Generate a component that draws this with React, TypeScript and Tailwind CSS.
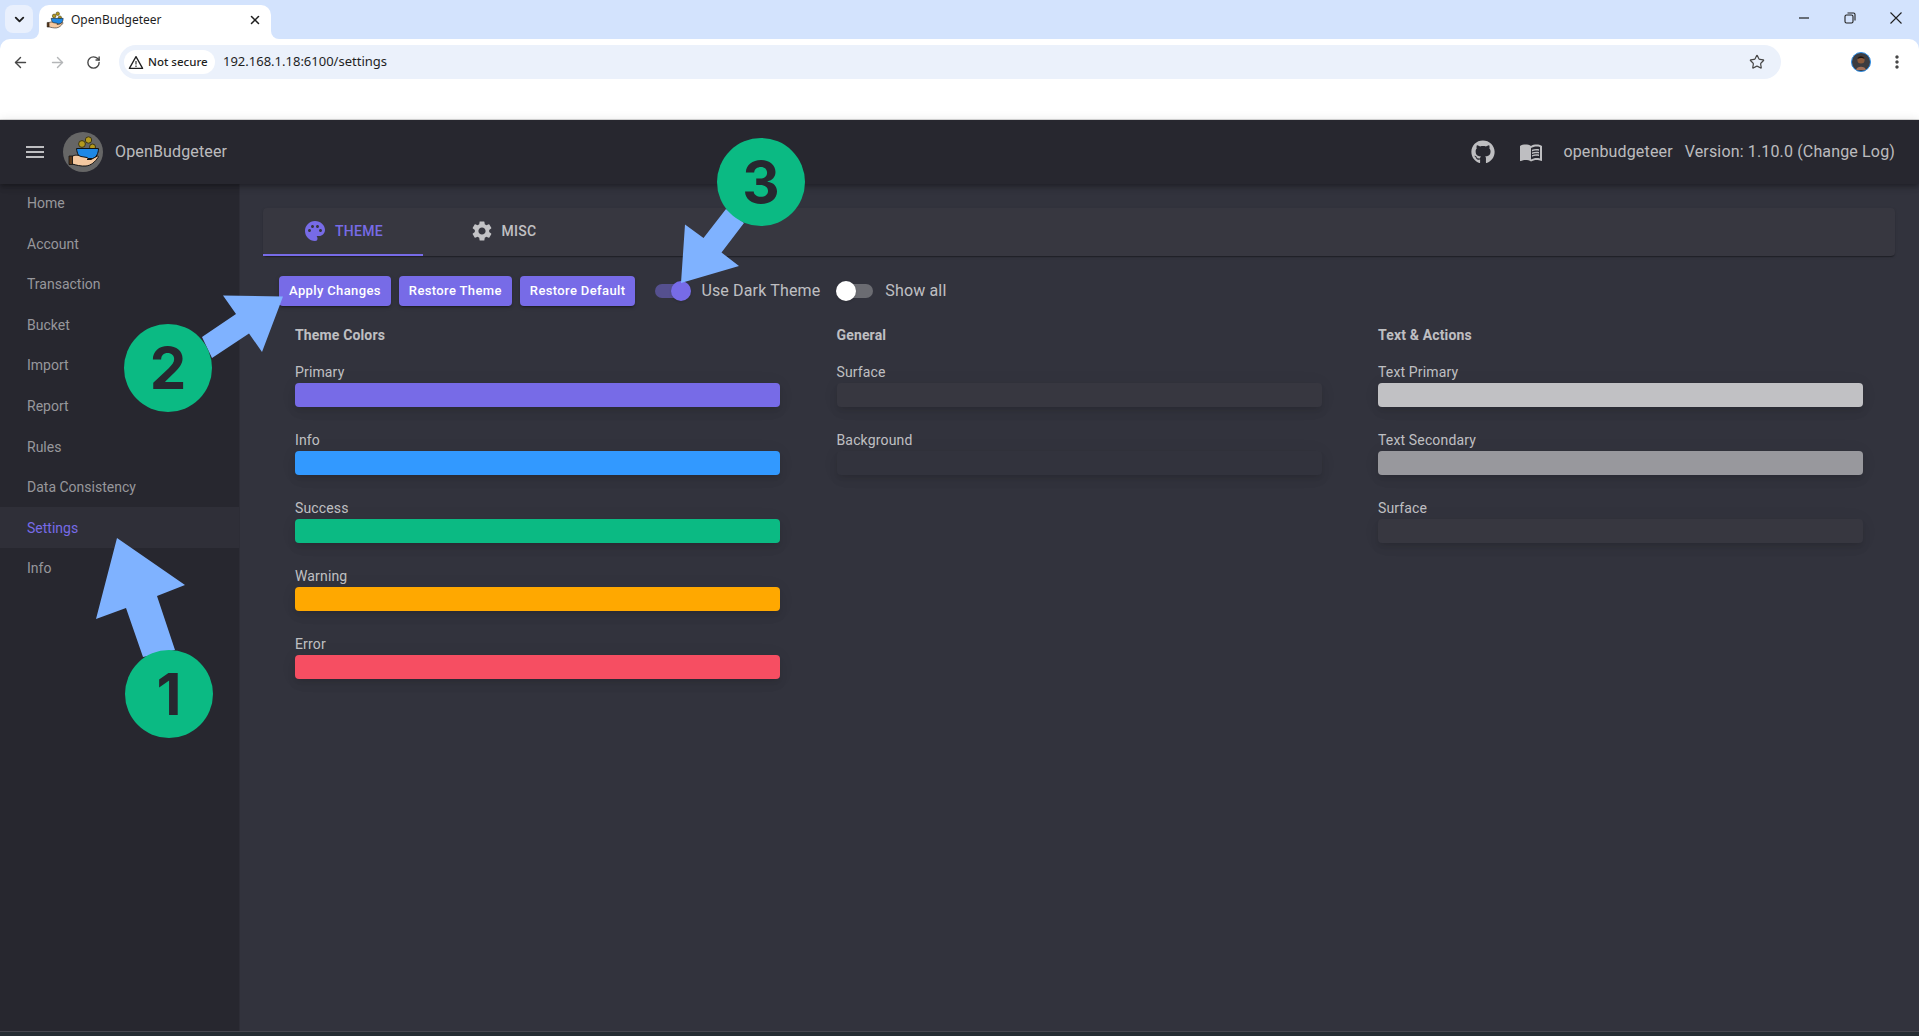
import { ReactNode } from "react";
import { ArrowLeft, ArrowRight, ChevronDown, RotateCw, Star, X } from "lucide-react";
import { FaGithub } from "react-icons/fa";
import { MdMenu, MdMenuBook, MdMoreVert, MdPalette, MdSettings } from "react-icons/md";

const navItems = ["Home", "Account", "Transaction", "Bucket", "Import", "Report", "Rules", "Data Consistency", "Settings", "Info"];

const swatchShadow = "shadow-[0_3px_5px_-1px_rgba(0,0,0,0.08),0_6px_10px_0_rgba(0,0,0,0.06),0_1px_18px_0_rgba(0,0,0,0.05)]";

const columns = [
  {
    title: "Theme Colors",
    rows: [
      { label: "Primary", color: "bg-[#776be7]" },
      { label: "Info", color: "bg-[#3299ff]" },
      { label: "Success", color: "bg-[#0bba83]" },
      { label: "Warning", color: "bg-[#ffa800]" },
      { label: "Error", color: "bg-[#f64e62]" },
    ],
  },
  {
    title: "General",
    rows: [
      { label: "Surface", color: "bg-[#373740]" },
      { label: "Background", color: "bg-[#32333d]" },
    ],
  },
  {
    title: "Text & Actions",
    rows: [
      { label: "Text Primary", color: "bg-[#c1c1c4]" },
      { label: "Text Secondary", color: "bg-[#98989d]" },
      { label: "Surface", color: "bg-[#373740]" },
    ],
  },
];

const Logo = ({ size, disc }: { size: number; disc?: boolean }) => (
  <svg width={size} height={size} viewBox={disc ? "0 0 40 40" : "4 3 33 33"} className="shrink-0">
    {disc && <circle cx="20" cy="20" r="20" fill="#666666" />}
    <circle cx="19" cy="12" r="3.4" fill="#b59a1c" stroke="#3a3416" strokeWidth="1" />
    <circle cx="25.5" cy="8" r="3.2" fill="#b59a1c" stroke="#3a3416" strokeWidth="1" />
    <circle cx="29.5" cy="15" r="3" fill="#b59a1c" stroke="#3a3416" strokeWidth="1" />
    <path d="M13.5 16.5H35.5C35.5 21.5 33 25.5 30 26.5H19C16 25.5 14 21.5 13.5 16.5Z" fill="#1e88e5" stroke="#111" strokeWidth="1" />
    <path d="M9 24.5C12 22.5 15 23 18 24.5L24 25.5C25.5 26 25.5 27.5 24 27.5L28 27.5L34.5 24C35.5 24 35.5 25 35 25.5C32 30 28 33.5 23 34C18 34.5 13 33 9 32Z" fill="#f5c9a0" stroke="#111" strokeWidth="1" />
    <path d="M6 24H9.5V32.5H6Z" fill="#5d3a1a" stroke="#111" strokeWidth="0.8" />
  </svg>
);

const Switch = ({ on }: { on?: boolean }) => (
  <span className={`relative block w-[34px] h-[14px] rounded-full ${on ? "bg-[#55508f]" : "bg-[#6b6c72]"}`}>
    <span className={`absolute top-[-3px] w-5 h-5 rounded-full shadow ${on ? "right-[-2px] bg-[#776be7]" : "left-[-3px] bg-white"}`} />
  </span>
);

const Tab = ({ icon, label, active }: { icon: ReactNode; label: string; active?: boolean }) => (
  <div className={`w-40 h-12 flex items-center justify-center gap-2 border-b-2 text-sm font-medium uppercase tracking-[0.02em] ${active ? "border-[#776be7] text-[#776be7]" : "border-transparent text-white/70"}`}>
    {icon}
    <span>{label}</span>
  </div>
);

const ActionButton = ({ children }: { children: ReactNode }) => (
  <button className="h-[30px] px-[10px] rounded bg-[#776be7] text-white text-[13px] font-medium tracking-[0.02857em] shadow-[0_3px_1px_-2px_rgba(0,0,0,0.2),0_2px_2px_0_rgba(0,0,0,0.14),0_1px_5px_0_rgba(0,0,0,0.12)]">
    {children}
  </button>
);

const BrowserChrome = () => (
  <div className="h-[120px] bg-[#d3e3fd] shrink-0 flex flex-col font-['Noto_Sans',sans-serif]">
    <div className="h-[39px] flex items-end">
      <div className="ml-[5px] mb-[6px] w-7 h-7 rounded-lg bg-[#e9f0fd] flex items-center justify-center text-[#1f1f1f]">
        <ChevronDown size={15} strokeWidth={3} />
      </div>
      <div className="relative ml-[6px] w-[232px] h-[34px] bg-white rounded-t-[10px] flex items-center pl-[7px] pr-2 pb-1">
        <span className="absolute bottom-0 left-[-8px] w-2 h-2 bg-white">
          <span className="block w-2 h-2 bg-[#d3e3fd] rounded-br-lg" />
        </span>
        <span className="absolute bottom-0 right-[-8px] w-2 h-2 bg-white">
          <span className="block w-2 h-2 bg-[#d3e3fd] rounded-bl-lg" />
        </span>
        <Logo size={18} />
        <span className="ml-[7px] text-xs text-[#1f1f1f]">OpenBudgeteer</span>
        <X size={14} strokeWidth={2.6} className="ml-auto mr-[1px] text-[#1f1f1f]" />
      </div>
      <div className="ml-auto h-full flex items-center pr-4 pb-1 gap-[32px] text-[#1f1f1f]">
        <svg width="14" height="14" viewBox="0 0 14 14"><path d="M2 7H12" stroke="currentColor" strokeWidth="1.2" /></svg>
        <svg width="14" height="14" viewBox="0 0 14 14" fill="none" stroke="currentColor" strokeWidth="1.1"><rect x="2" y="4" width="8" height="8" rx="1.5" /><path d="M4.5 2H10.5C11.5 2 12 2.5 12 3.5V9.5" /></svg>
        <svg width="14" height="14" viewBox="0 0 14 14" fill="none" stroke="currentColor" strokeWidth="1.1"><path d="M1.5 1.5L12.5 12.5M12.5 1.5L1.5 12.5" /></svg>
      </div>
    </div>
    <div className="flex-1 bg-white rounded-t-[10px] border-b border-[#dcdcdc]">
      <div className="h-[46px] flex items-center">
        <div className="w-[119px] flex items-center pl-[12px] gap-[20px]">
          <ArrowLeft size={17} strokeWidth={2} className="text-[#474747]" />
          <ArrowRight size={17} strokeWidth={2} className="text-[#b4b6b8]" />
          <RotateCw size={15} strokeWidth={2.2} className="text-[#474747]" />
        </div>
        <div className="w-[1662px] h-[34px] rounded-full bg-[#ebf1fb] flex items-center pl-[5px] pr-[16px]">
          <div className="h-6 w-[91px] rounded-full bg-white flex items-center pl-[4px]">
            <svg width="16" height="15" viewBox="0 0 16 15" fill="none" stroke="#1f1f1f" strokeWidth="1.3">
              <path d="M8 1.6L14.6 13.4H1.4Z" strokeLinejoin="round" />
              <path d="M8 6V9.6M8 10.6V12" strokeWidth="1.1" />
            </svg>
            <span className="ml-[4px] text-[11.5px] font-medium text-[#1f1f1f]">Not secure</span>
          </div>
          <span className="ml-[8px] text-[13px] text-[#1f1f1f]">192.168.1.18:6100/settings</span>
          <Star size={16} strokeWidth={1.8} className="ml-auto text-[#474747]" />
        </div>
        <div className="flex-1 flex items-center pl-[70px] gap-4">
          <svg width="20" height="20" viewBox="0 0 20 20" className="shrink-0">
            <circle cx="10" cy="10" r="9.5" fill="#3c3c40" stroke="#2f8fe8" strokeWidth="1" />
            <circle cx="10" cy="8" r="3.6" fill="#8a5a3c" />
            <path d="M6.5 7C6.8 3.5 13 3.4 13.5 7C11.5 5.8 9 5.8 6.5 7Z" fill="#1c1410" />
            <path d="M5 18C5.5 13.5 14.5 13.5 15 18Z" fill="#a0705a" />
          </svg>
          <MdMoreVert size={20} className="text-[#474747] shrink-0" />
        </div>
      </div>
    </div>
  </div>
);

const TopBar = () => (
  <header className="relative z-10 h-16 shrink-0 bg-[#27272f] text-white/70 text-base tracking-[0.00938em] flex items-center shadow-[0_2px_4px_-1px_rgba(0,0,0,0.2),0_4px_5px_0_rgba(0,0,0,0.14),0_1px_10px_0_rgba(0,0,0,0.12)]">
    <MdMenu size={24} className="ml-[23px]" />
    <div className="ml-[16px]"><Logo size={40} disc /></div>
    <span className="ml-3">OpenBudgeteer</span>
    <div className="ml-auto flex items-center pr-6">
      <FaGithub size={24} />
      <MdMenuBook size={24} className="ml-6" />
      <span className="ml-5">openbudgeteer</span>
      <span className="ml-3">Version: 1.10.0 (Change Log)</span>
    </div>
  </header>
);

const Sidebar = () => (
  <nav className="w-[240px] shrink-0 bg-[#27272f] border-r border-[#2d2d36] text-sm text-[#97979c]">
    <div className="-mt-[1.3px]">
      {navItems.map((item) => (
        <div key={item} className={`h-[40.6px] pl-[27px] flex items-center ${item === "Settings" ? "bg-[#2f2f38] text-[#776be7]" : ""}`}>
          {item}
        </div>
      ))}
    </div>
  </nav>
);

const SettingsPanel = () => (
  <main className="flex-1 bg-[#32333d] pt-6 pl-[23px] pr-6 text-white/70">
    <div className="h-12 flex rounded bg-[#373740] shadow-[0_2px_1px_-1px_rgba(0,0,0,0.2),0_1px_1px_0_rgba(0,0,0,0.14),0_1px_3px_0_rgba(0,0,0,0.12)]">
      <Tab active label="Theme" icon={<MdPalette size={24} />} />
      <Tab label="Misc" icon={<MdSettings size={24} />} />
    </div>
    <div className="mt-5 ml-4 h-[30px] flex items-center">
      <div className="flex gap-2">
        <ActionButton>Apply Changes</ActionButton>
        <ActionButton>Restore Theme</ActionButton>
        <ActionButton>Restore Default</ActionButton>
      </div>
      <div className="ml-5"><Switch on /></div>
      <span className="ml-3 text-base tracking-[0.00938em]">Use Dark Theme</span>
      <div className="ml-[19px]"><Switch /></div>
      <span className="ml-3 text-base tracking-[0.00938em]">Show all</span>
    </div>
    <div className="mt-[18.5px] px-8 grid grid-cols-3 gap-x-[56.5px] text-sm tracking-[0.01071em]">
      {columns.map((col) => (
        <section key={col.title}>
          <h6 className="h-[21px] leading-[21px] font-bold mb-4">{col.title}</h6>
          {col.rows.map((row) => (
            <div key={col.title + row.label} className="mb-[23px]">
              <div className="h-[21px] leading-[21px]">{row.label}</div>
              <div className={`h-6 rounded ${row.color} ${swatchShadow}`} />
            </div>
          ))}
        </section>
      ))}
    </div>
  </main>
);

// the numbered callouts drawn on top of the screenshot
const Callouts = () => (
  <>
    <svg width="1919" height="1036" viewBox="0 0 1919 1036" className="absolute inset-0 z-20 pointer-events-none">
      <g fill="#7fb2ff">
        <path d="M117 538L185 585L157 596L175 650L143 657L126 608L96 619Z" />
        <path d="M283 296.5L223 295.5L236 314L202 337L212 358L249 333.5L262 352Z" />
        <path d="M681 283L685 224.5L703.5 238L726 209L744 223L721.5 252.5L739 266Z" />
      </g>
    </svg>
    {[
      { n: "1", pos: "left-[125px] top-[650px]" },
      { n: "2", pos: "left-[124px] top-[324px]" },
      { n: "3", pos: "left-[717px] top-[138px]" },
    ].map((c) => (
      <div key={c.n} className={`absolute z-20 w-[88px] h-[88px] rounded-full bg-[#0bba83] text-[#27272f] flex items-center justify-center font-['Inter',sans-serif] font-bold text-[58px] leading-none ${c.pos}`}>
        {c.n}
      </div>
    ))}
  </>
);

export default function App() {
  return (
    <div className="relative w-[1919px] h-[1036px] overflow-hidden flex flex-col font-['Roboto',sans-serif]">
      <BrowserChrome />
      <TopBar />
      <div className="flex-1 flex min-h-0">
        <Sidebar />
        <SettingsPanel />
      </div>
      <div className="h-[5px] shrink-0 bg-[#252c32] border-t border-[#45454d]" />
      <Callouts />
    </div>
  );
}
